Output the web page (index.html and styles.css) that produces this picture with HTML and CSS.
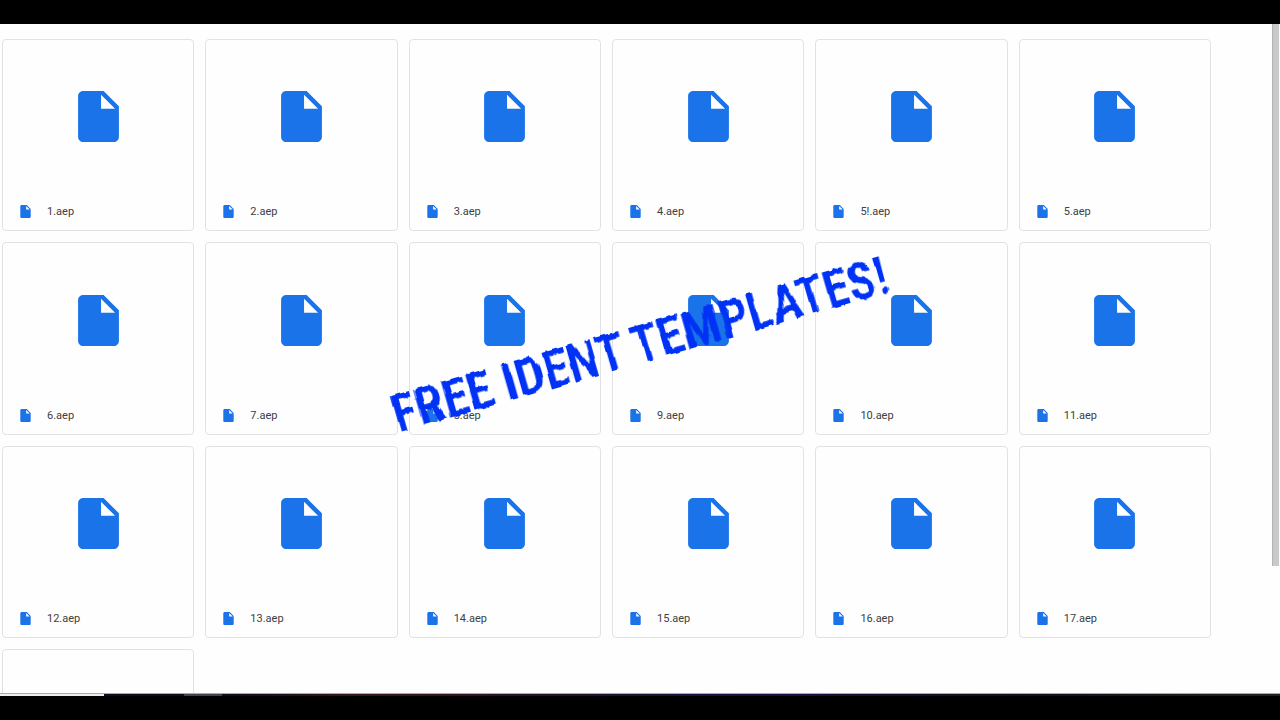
FILE: index.html
```html
<!DOCTYPE html>
<html lang="en">
<head>
<meta charset="utf-8">
<title>Free ident templates</title>
<link rel="stylesheet" href="styles.css">
<script src="files.js" defer></script>
</head>
<body>
<svg class="defs" aria-hidden="true">
  <symbol id="file" viewBox="0 0 16 20">
    <path fill="#1a73e8" fill-rule="evenodd" d="M2 0C.9 0 0 .9 0 2v16c0 1.100.9 2 2 2h12c1.100 0 2-.9 2-2V6l-6-6H2zm7 7V1.500L14.500 7H9z"/>
  </symbol>
  <filter id="brush" x="-5%" y="-20%" width="110%" height="140%">
    <feTurbulence type="fractalNoise" baseFrequency="0.14 0.03" numOctaves="2" seed="4" result="noise"/>
    <feDisplacementMap in="SourceGraphic" in2="noise" scale="5" xChannelSelector="R" yChannelSelector="G"/>
  </filter>
</svg>
<div class="page">
  <div class="bar-top"></div>
  <main class="drive">
    <div class="files"></div>
    <div class="scroll"><div class="thumb"></div></div>
    <h1 class="banner">FREE IDENT TEMPLATES!</h1>
  </main>
  <div class="taskbar"><span class="task-search"></span><span class="task-gap"></span><span class="task-active"></span><span class="task-rest"></span></div>
  <div class="bar-bottom"></div>
</div>
</body>
</html>
```
FILE: styles.css
```css
* { box-sizing: border-box; }
body { margin: 0; background: #000; font-family: Roboto, sans-serif; }
.defs { position: absolute; width: 0; height: 0; }
.page { display: flex; flex-direction: column; height: 100vh; }
.bar-top { height: 24px; flex: none; background: #000; }
.bar-bottom { height: 24px; flex: none; background: #000; }
.drive { position: relative; display: flex; flex: 1; min-height: 0; overflow: hidden; background: #fefefe; }
.files {
  flex: 1;
  display: grid;
  grid-template-columns: repeat(6, 1fr);
  align-content: start;
  gap: 11px;
  padding: 15px 61px 0 2px;
}
.card {
  display: flex;
  flex-direction: column;
  aspect-ratio: 1;
  border: 1px solid #e2e2e2;
  border-radius: 4px;
  background: #fefefe;
}
.preview { flex: 1; display: flex; align-items: center; justify-content: center; }
.icon-large { width: 41px; height: 51px; }
.caption { display: flex; align-items: center; gap: 16px; height: 37px; padding-left: 17px; font-size: 11px; color: #3c4043; }
.icon-small { width: 11px; height: 13px; }
.scroll { width: 8px; padding-right: 1px; }
.thumb { height: 81%; background: #c9c9c9; border-left: 1px solid #b4b4b4; }
.banner {
  position: absolute;
  left: 50%;
  top: 48%;
  margin: 0;
  transform: translate(-50%, -50%) rotate(-16deg);
  font: 600 51px/1 "Roboto Condensed", "Open Sans Condensed", Lato, sans-serif;
  color: #0433f5;
  white-space: nowrap;
  filter: url(#brush);
}
.taskbar { display: flex; height: 3px; flex: none; border-top: 1px solid #aaa; background: #15131f; }
.task-search { width: 104px; background: #eee; }
.task-gap { width: 80px; background: #0c0c20; }
.task-active { width: 38px; background: #444150; }
.task-rest { flex: 1; background: linear-gradient(90deg, #100a1c, #3a1420 13%, #281028 30%, #141440 45%, #181040 55%, #10101c 75%, #202024); }
```
FILE: files.js
```js
const names = ["1", "2", "3", "4", "5!", "5", "6", "7", "8", "9", "10", "11", "12", "13", "14", "15", "16", "17"];
const grid = document.querySelector(".files");
const cards = names.map(name => `
  <article class="card">
    <div class="preview"><svg class="icon-large"><use href="#file"/></svg></div>
    <div class="caption"><svg class="icon-small"><use href="#file"/></svg><span>${name}.aep</span></div>
  </article>`);
cards.push('<article class="card"></article>');
grid.innerHTML = cards.join("");
```
